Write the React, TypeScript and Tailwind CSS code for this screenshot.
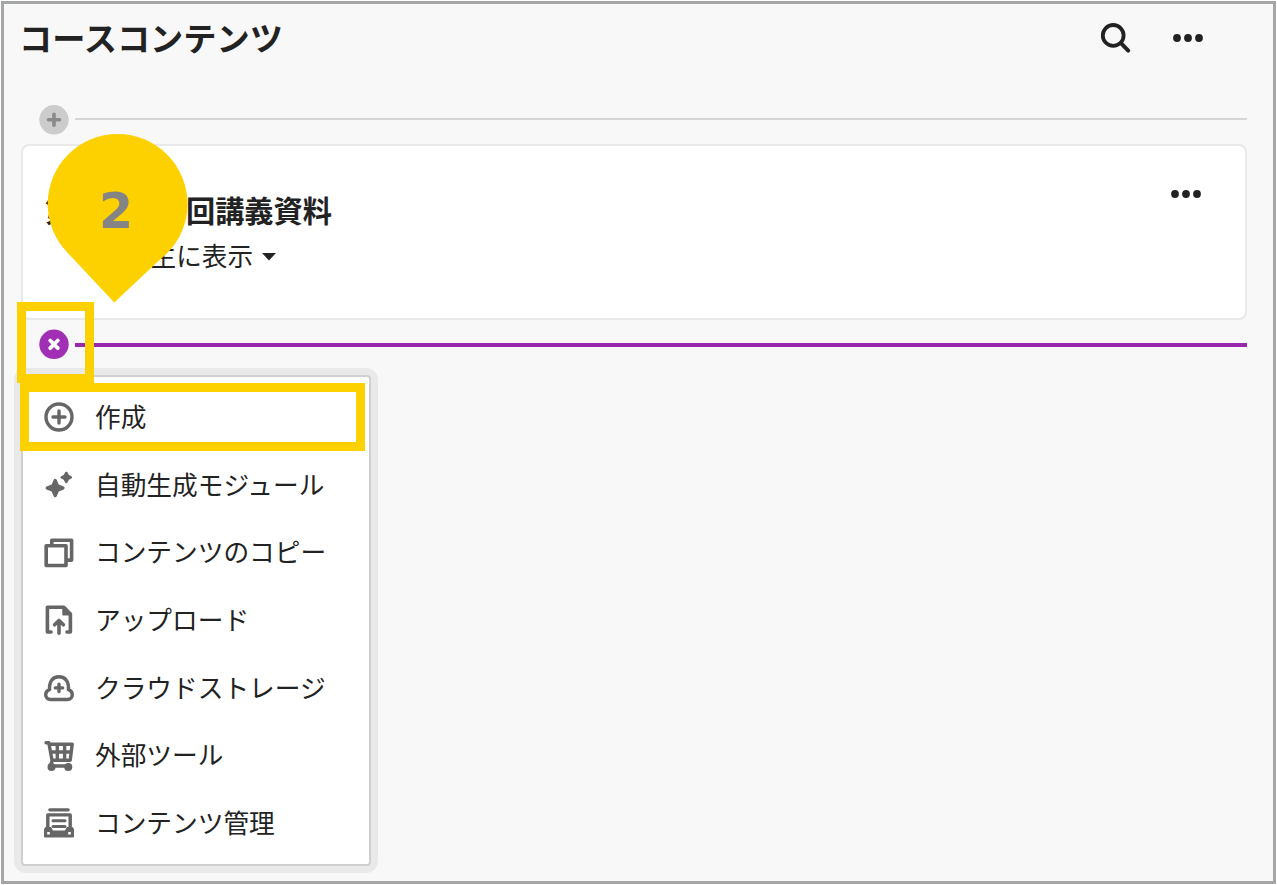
import React from "react";

const YELLOW_BOX = "border-[9px] border-[#fdd100]";

function Dots() {
  return (
    <svg width="30" height="8" viewBox="0 0 30 8" fill="#222">
      <circle cx="4" cy="4" r="3.9" />
      <circle cx="15" cy="4" r="3.9" />
      <circle cx="26" cy="4" r="3.9" />
    </svg>
  );
}

function SearchIcon() {
  return (
    <svg width="32" height="32" viewBox="0 0 32 32" fill="none" stroke="#222" strokeLinecap="round">
      <circle cx="13.2" cy="13.4" r="10.4" strokeWidth="3.8" />
      <path d="M21.2 21.4L28.2 28.6" strokeWidth="4" />
    </svg>
  );
}

const menuItems = [
  {
    label: "作成",
    icon: (
      <>
        <circle cx="15" cy="15" r="13" fill="none" stroke="#666" strokeWidth="3.4" />
        <path d="M15 9v12M9 15h12" stroke="#666" strokeWidth="3.4" strokeLinecap="round" />
      </>
    ),
  },
  {
    label: "自動生成モジュール",
    icon: (
      <g fill="#666" stroke="#666" strokeLinejoin="round">
        <path d="M11.2 10.4L13.6 15.8L19 18L13.6 20.3L11.2 25.7L8.8 20.3L3.2 18L8.8 15.8Z" strokeWidth="3.2" />
        <path d="M22.3 3L23.9 5.9L26.8 7.4L23.9 8.9L22.3 11.8L20.7 8.9L17.8 7.4L20.7 5.9Z" strokeWidth="2.6" />
      </g>
    ),
  },
  {
    label: "コンテンツのコピー",
    icon: (
      <g fill="none" stroke="#666" strokeWidth="3.6" strokeLinejoin="round">
        <path d="M2.2 7.7h19.8v19.8H2.2z" />
        <path d="M7.8 6V2.3h19.8v19.8H23" />
      </g>
    ),
  },
  {
    label: "アップロード",
    icon: (
      <g fill="none" stroke="#666" strokeWidth="3.6" strokeLinecap="round" strokeLinejoin="round">
        <path d="M7 27H3.4V2.2h16.4L26.4 9v18H23" />
        <path d="M19 2.2v7.6h7.4z" fill="#666" strokeWidth="1.4" />
        <path d="M15 28.2V16.5M10.6 19.8L15 15.4l4.4 4.4" />
      </g>
    ),
  },
  {
    label: "クラウドストレージ",
    icon: (
      <g fill="none" stroke="#666" strokeWidth="3.4" strokeLinecap="round" strokeLinejoin="round">
        <path d="M6.5 26.5h17c3 0 4.800-2 4.800-4.700c0-2.600-1.600-4.600-3.900-5.200C25 8.500 21.500 3.800 15 3.800S5 8.500 5.600 16.600C3.300 17.200 1.700 19.200 1.700 21.800c0 2.700 1.800 4.700 4.800 4.700z" />
        <path d="M15 11.200v7.400M11.300 14.900h7.400" strokeWidth="3.400" />
      </g>
    ),
  },
  {
    label: "外部ツール",
    icon: (
      <g fill="none" stroke="#666" strokeWidth="3.4" strokeLinecap="round" strokeLinejoin="round">
        <path d="M2 1.800h2.800L8 19.200h18.200L28.200 3.200H6M7 11h20M13.300 4v14.500M20.600 4v14.500M8 20L6.800 24.300" />
        <path d="M7.500 25h17" />
        <circle cx="7.500" cy="26" r="2.300" fill="#666" />
        <circle cx="24.300" cy="26" r="2.300" fill="#666" />
      </g>
    ),
  },
  {
    label: "コンテンツ管理",
    icon: (
      <g fill="none" stroke="#666" strokeWidth="3.4" strokeLinecap="round" strokeLinejoin="round">
        <path d="M5.800 1.800h18.400" strokeWidth="3.200" />
        <path d="M3.800 20V6.900h22.400V20" />
        <path d="M9 12.800h12M9 18.400h12" strokeWidth="3" />
        <path
          fill="#666"
          stroke="none"
          fillRule="evenodd"
          d="M1.500 19h5.500l2 3.500h12l2-3.500h5.500L30 21v7.500q0 1-1 1H1q-1 0-1-1V21zM3.200 24v2.500h2.600v-2.500zM24.200 24v2.500h2.600v-2.500z"
        />
      </g>
    ),
  },
];

function Marker() {
  return (
    <div className="absolute top-[134px] left-[47px] h-[169px] w-[142px]">
      <svg className="absolute inset-0" width="142" height="169" viewBox="0 0 142 169" fill="#fdd100">
        <circle cx="70.600" cy="69.900" r="69.900" />
        <path d="M67.300 168.500L19.500 117.500L70 70L121.500 117.500Z" />
      </svg>
      <span className="absolute top-[42px] left-[52px] font-['DejaVu_Sans',sans-serif] text-[49px] leading-[72px] font-bold text-[#848484]">
        2
      </span>
    </div>
  );
}

export default function App() {
  return (
    <div className="h-[885px] w-[1277px] bg-white p-px font-['Noto_Sans_CJK_JP',sans-serif] text-[#222]">
      <div className="h-[883px] w-[1275px] overflow-hidden border-[3px] border-[#a5a7a6] bg-[#f8f8f8] pl-[17px]">
        <header className="flex h-[68px] items-center">
          <h1 className="-mt-[3px] -ml-[2px] text-[33.2px] leading-[66px] font-bold">コースコンテンツ</h1>
          <div className="mr-[70px] ml-auto flex items-center gap-[41px]">
            <SearchIcon />
            <Dots />
          </div>
        </header>

        <div className="mt-[33px] ml-[18px] flex h-[30px] items-center gap-[6px]">
          <svg width="30" height="30" viewBox="0 0 30 30">
            <circle cx="15" cy="14.8" r="14.7" fill="#ccc" />
            <path d="M15 9.300v11M9.500 14.800h11" stroke="#8a8a8a" strokeWidth="3.6" strokeLinecap="round" />
          </svg>
          <div className="mb-[2px] h-[2px] w-[1172px] bg-[#d6d6d6]" />
        </div>

        <section className="mt-[9px] flex h-[176px] w-[1226px] justify-between rounded-lg border-2 border-[#e9e9e9] bg-white">
          <div className="pt-[41px] pl-[22px]">
            <h2 className="flex h-[46px] items-center text-[29.2px] font-bold">
              <span className="w-[141px]">第</span>
              <span>回講義資料</span>
            </h2>
            <div className="flex h-[44px] items-center pl-[80px] text-[25.6px]">
              学生に表示
              <svg className="mt-[3px] ml-[9px]" width="14" height="8" viewBox="0 0 14 8">
                <path d="M0 0h14L7 7.500z" fill="#222" />
              </svg>
            </div>
          </div>
          <div className="mt-[44px] mr-[44px]">
            <Dots />
          </div>
        </section>

        <div className="mt-[9px] ml-[18px] flex h-[30px] items-center gap-[6px]">
          <svg width="30" height="30" viewBox="0 0 30 30">
            <circle cx="15" cy="15.3" r="14.7" fill="#a12fb5" />
            <path d="M11.200 11.500l7.600 7.600M18.800 11.500l-7.600 7.600" stroke="#fff" strokeWidth="3.8" strokeLinecap="round" />
          </svg>
          <div className="mt-[2px] h-[4px] w-[1172px] bg-[#9a28ae]" />
        </div>

        <nav className="mt-[9px] -ml-[7px] w-[364px] rounded-xl bg-[#e9e9e9] p-[7px]">
          <ul className="h-[491px] rounded border-2 border-[#d0d0d0] bg-white pt-[6px]">
            {menuItems.map((item) => (
              <li key={item.label} className="flex h-[67.7px] items-center gap-[21px] pl-[21px]">
                <svg className="mt-px shrink-0" width="30" height="30" viewBox="0 0 30 30">
                  {item.icon}
                </svg>
                <span className="-mt-[2px] text-[25.7px] leading-none whitespace-nowrap">{item.label}</span>
              </li>
            ))}
          </ul>
        </nav>
      </div>

      <div className={`absolute top-[302px] left-[17px] h-[81px] w-[77px] ${YELLOW_BOX}`} />
      <div className={`absolute top-[383px] left-[20px] h-[68px] w-[345px] ${YELLOW_BOX}`} />
      <Marker />
    </div>
  );
}
